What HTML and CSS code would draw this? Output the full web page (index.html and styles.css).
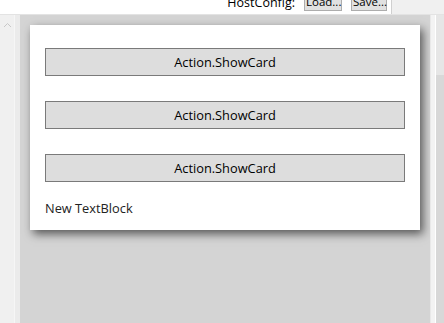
FILE: index.html
```html
<!DOCTYPE html>
<html>
<head>
    <title>Card Designer</title>
    <link rel="stylesheet" href="styles.css">
</head>
<body>
    <div class="topbar">
        <div class="host-config">
            <span class="host-label">HostConfig:</span>
            <button class="tool-btn">Load...</button>
            <button class="tool-btn save">Save...</button>
        </div>
        <div class="tab-stub"></div>
    </div>

    <div class="main">
        <div class="left-scroll">
            <svg class="arrow-up" width="9" height="6" viewBox="0 0 9 6">
                <path d="M1 5 L4.5 1.5 L8 5" fill="none" stroke="#c8c8c8" stroke-width="1"/>
            </svg>
        </div>
        <div class="gutter"></div>

        <div class="canvas">
            <div class="card">
                <button class="action">Action.ShowCard</button>
                <button class="action">Action.ShowCard</button>
                <button class="action">Action.ShowCard</button>
                <div class="text-block">New TextBlock</div>
            </div>
        </div>

        <div class="right-strip"></div>
        <div class="vscroll">
            <div class="thumb"></div>
        </div>
    </div>
</body>
</html>
```

FILE: styles.css
```css
html, body { margin: 0; padding: 0; height: 100%; }
body {
    font-family: "Open Sans", "Noto Sans", sans-serif;
    background: #fff;
    display: flex;
    flex-direction: column;
    overflow: hidden;
}

.topbar {
    height: 14px;
    display: flex;
    justify-content: flex-end;
    align-items: flex-end;
    background: #fff;
    border-bottom: 1px solid #e3e3e3;
    overflow: hidden;
}
.host-config {
    display: flex;
    align-items: flex-end;
    gap: 9px;
    margin-bottom: 3px;
    margin-right: 4px;
}
.host-label { font-size: 12.5px; line-height: 16px; color: #000; margin-bottom: 0; }
.tool-btn {
    font-family: inherit;
    font-size: 11.5px;
    line-height: 14px;
    padding: 0 1px;
    width: 38px;
    height: 18px;
    background: #e1e1e1;
    border: 1px solid #adadad;
    color: #000;
}
.tool-btn.save { width: 36px; }
.tab-stub {
    width: 52px;
    height: 14px;
    background: #f0f0f0;
    border-left: 1px solid #d0d0d0;
}

.main {
    flex: 1;
    display: flex;
}
.left-scroll {
    width: 14px;
    background: #f0f0f0;
    display: flex;
    justify-content: center;
    padding-top: 7px;
    box-sizing: border-box;
}
.arrow-up { display: block; }
.gutter { width: 6px; background: #ebebeb; border-left: 1px solid #f6f6f6; box-sizing: border-box; }

.canvas {
    flex: 1;
    background: #d4d4d4;
    padding: 10px 10px 0 10px;
}
.card {
    background: #fff;
    padding: 23px 15px 13px 15px;
    display: flex;
    flex-direction: column;
    box-shadow: 3px 4px 9px rgba(0, 0, 0, 0.6);
}
.action {
    font-family: inherit;
    font-size: 12.8px;
    color: #000;
    height: 28px;
    background: #dddddd;
    border: 1px solid #7a7a7a;
    margin-bottom: 25px;
    padding: 0;
}
.action:last-of-type { margin-bottom: 18px; }
.text-block {
    font-size: 12.8px;
    line-height: 17px;
    color: #222;
}

.right-strip {
    width: 6px;
    background: #f3f3f3;
    border-left: 1px solid #e8e8e8;
    border-right: 1px solid #ffffff;
    box-sizing: border-box;
}
.vscroll {
    width: 8px;
    background: #d8d8d8;
}
.thumb {
    height: 60px;
    background: #e6e6e6;
}
```
